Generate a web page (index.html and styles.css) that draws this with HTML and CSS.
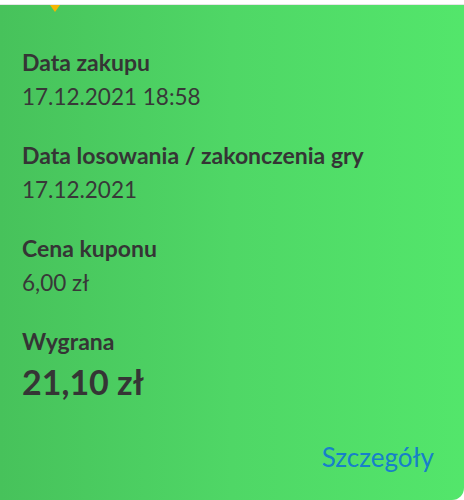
FILE: index.html
```html
<!DOCTYPE html>
<html lang="pl">
<head>
<meta charset="utf-8">
<link rel="stylesheet" href="styles.css">
</head>
<body>
<div class="top"></div>
<div class="card">
  <span class="pointer"></span>
  <div class="item">
    <div class="label">Data zakupu</div>
    <div class="value">17.12.2021 18:58</div>
  </div>
  <div class="item">
    <div class="label">Data losowania / zakonczenia gry</div>
    <div class="value">17.12.2021</div>
  </div>
  <div class="item">
    <div class="label">Cena kuponu</div>
    <div class="value">6,00 zł</div>
  </div>
  <div class="item">
    <div class="label">Wygrana</div>
    <div class="value big">21,10 zł</div>
  </div>
  <div class="footer"><a class="details">Szczegóły</a></div>
</div>
</body>
</html>
```
FILE: styles.css
```css
html, body {
  margin: 0;
  padding: 0;
  background: #ffffff;
  width: 464px;
  height: 500px;
  overflow: hidden;
  font-family: Lato, "Open Sans", sans-serif;
}
.top {
  height: 5px;
  background: #ffffff;
  border-bottom: 1px solid #e6e6e6;
  box-sizing: border-box;
}
.card {
  position: relative;
  height: 495px;
  box-sizing: border-box;
  background: linear-gradient(90deg, #47c25b 0%, #4fd766 50%, #53e66b 100%);
  border-bottom-right-radius: 12px;
  padding: 43px 22px 0 22px;
  color: #353535;
  display: flex;
  flex-direction: column;
}
.pointer {
  position: absolute;
  left: 50px;
  top: 0;
  width: 0;
  height: 0;
  border-left: 5px solid transparent;
  border-right: 5px solid transparent;
  border-top: 7px solid #f7b500;
}
.item {
  display: flex;
  flex-direction: column;
  margin-bottom: 30px;
}
.label {
  font-weight: 700;
  font-size: 23px;
  line-height: 28px;
}
.value {
  font-weight: 400;
  font-size: 22.5px;
  line-height: 28px;
  margin-top: 7px;
  color: #383838;
}
.value.big {
  font-weight: 700;
  font-size: 34px;
  line-height: 40px;
  margin-top: 7px;
  color: #353535;
}
.footer {
  display: flex;
  justify-content: flex-end;
  margin-top: 9px;
  padding-right: 8px;
}
.details {
  color: #1780c9;
  font-size: 26px;
  line-height: 32px;
}
```
